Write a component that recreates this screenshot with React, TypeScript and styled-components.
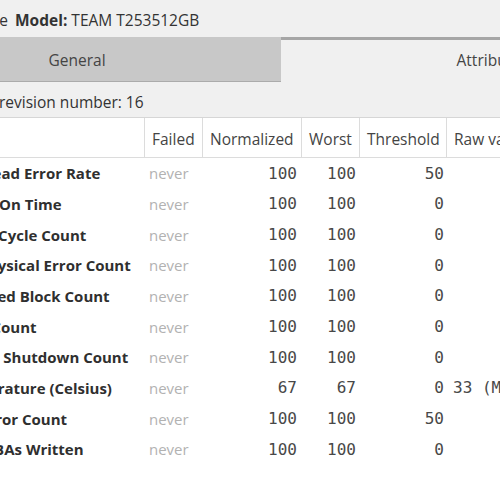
import React from "react";
import styled, { createGlobalStyle } from "styled-components";

const Global = createGlobalStyle`
  html, body { margin: 0; padding: 0; background: #f0f0f0; overflow: hidden; }
  body { font-family: "Open Sans", "DejaVu Sans", sans-serif; }
`;

const Window = styled.div`
  width: 500px;
  height: 500px;
  overflow: hidden;
  background: #f0f0f0;
`;

const InfoLine = styled.div`
  height: 37px;
  box-sizing: border-box;
  padding-top: 2px;
  display: flex;
  align-items: center;
  gap: 7px;
  font-size: 15.5px;
  color: #333;
  white-space: nowrap;
`;

const DeviceLabel = styled.span`
  flex: 0 0 auto;
  width: 160px;
  margin-left: -152px;
  text-align: right;
`;

const Bold = styled.b`
  font-weight: 700;
`;

const TabBar = styled.div`
  display: flex;
  height: 45px;
  margin-left: -127px;
`;

const Tab = styled.div<{ $active?: boolean }>`
  flex: 0 0 auto;
  box-sizing: border-box;
  padding: ${(p) => (p.$active ? "0 175.5px 2px" : "0 175.5px")};
  display: flex;
  align-items: center;
  justify-content: center;
  font-size: 15.5px;
  color: #444;
  white-space: nowrap;
  background: ${(p) => (p.$active ? "#f0f0f0" : "#c8c8c8")};
  border-top: ${(p) => (p.$active ? "3px solid #a6a6a6" : "1px solid #c8c8c8")};
  border-bottom: 1px solid ${(p) => (p.$active ? "#f0f0f0" : "#ababab")};
`;

const Revision = styled.div`
  height: 36px;
  box-sizing: border-box;
  padding-top: 5px;
  display: flex;
  align-items: center;
  margin-left: -39px;
  font-size: 15.5px;
  color: #333;
  white-space: nowrap;
  border-bottom: 1px solid #d6d6d6;
`;

const Table = styled.div`
  margin-left: -57px;
  background: #fff;
  height: 400px;
`;

const cols = "202px 58px 99px 58px 87px 220px";

const HeaderRow = styled.div`
  display: grid;
  grid-template-columns: ${cols};
  height: 40px;
  box-sizing: border-box;
  border-bottom: 1px solid #dcdcdc;
`;

const HeadCell = styled.div`
  box-sizing: border-box;
  border-right: 1px solid #dcdcdc;
  display: flex;
  align-items: center;
  padding: 3px 0 0 7px;
  font-size: 15.5px;
  color: #444;
  white-space: nowrap;
  overflow: hidden;
`;

const Row = styled.div`
  display: grid;
  grid-template-columns: ${cols};
  height: 30.67px;
  align-items: center;
`;

const NameCell = styled.div`
  padding-left: 4px;
  font-size: 15px;
  font-weight: 700;
  color: #2f2f2f;
  white-space: nowrap;
  overflow: hidden;
`;

const FailCell = styled.div`
  padding-left: 4px;
  font-size: 15px;
  color: #b2b2b2;
  white-space: nowrap;
`;

const NumCell = styled.div<{ $pad: number }>`
  text-align: right;
  padding-right: ${(p) => p.$pad}px;
  font-family: "DejaVu Sans Mono", monospace;
  font-size: 16px;
  color: #484848;
  white-space: nowrap;
`;

const RawCell = styled.div`
  padding-left: 6px;
  font-family: "DejaVu Sans Mono", monospace;
  font-size: 16px;
  color: #484848;
  white-space: nowrap;
  overflow: hidden;
`;

type Attr = { name: string; norm: string; worst: string; thr: string; raw: string };

const attrs: Attr[] = [
  { name: "Raw Read Error Rate", norm: "100", worst: "100", thr: "50", raw: "" },
  { name: "Power-On Time", norm: "100", worst: "100", thr: "0", raw: "" },
  { name: "Power Cycle Count", norm: "100", worst: "100", thr: "0", raw: "" },
  { name: "SSD Physical Error Count", norm: "100", worst: "100", thr: "0", raw: "" },
  { name: "Reserved Block Count", norm: "100", worst: "100", thr: "0", raw: "" },
  { name: "Erase Count", norm: "100", worst: "100", thr: "0", raw: "" },
  { name: "Unsafe Shutdown Count", norm: "100", worst: "100", thr: "0", raw: "" },
  { name: "Temperature (Celsius)", norm: "67", worst: "67", thr: "0", raw: "33 (Min/Max 20/45)" },
  { name: "CRC Error Count", norm: "100", worst: "100", thr: "50", raw: "" },
  { name: "Host LBAs Written", norm: "100", worst: "100", thr: "0", raw: "" },
];

export default function App() {
  return (
    <Window>
      <Global />
      <InfoLine>
        <DeviceLabel>Device: /dev/sde</DeviceLabel>
        <span>
          <Bold>Model:</Bold> TEAM T253512GB
        </span>
      </InfoLine>
      <TabBar>
        <Tab>General</Tab>
        <Tab $active>Attributes</Tab>
      </TabBar>
      <Revision>Data revision number: 16</Revision>
      <Table>
        <HeaderRow>
          <HeadCell>Name</HeadCell>
          <HeadCell>Failed</HeadCell>
          <HeadCell>Normalized</HeadCell>
          <HeadCell>Worst</HeadCell>
          <HeadCell>Threshold</HeadCell>
          <HeadCell>Raw value</HeadCell>
        </HeaderRow>
        {attrs.map((a) => (
          <Row key={a.name}>
            <NameCell>{a.name}</NameCell>
            <FailCell>never</FailCell>
            <NumCell $pad={5}>{a.norm}</NumCell>
            <NumCell $pad={4}>{a.worst}</NumCell>
            <NumCell $pad={3}>{a.thr}</NumCell>
            <RawCell>{a.raw}</RawCell>
          </Row>
        ))}
      </Table>
    </Window>
  );
}
